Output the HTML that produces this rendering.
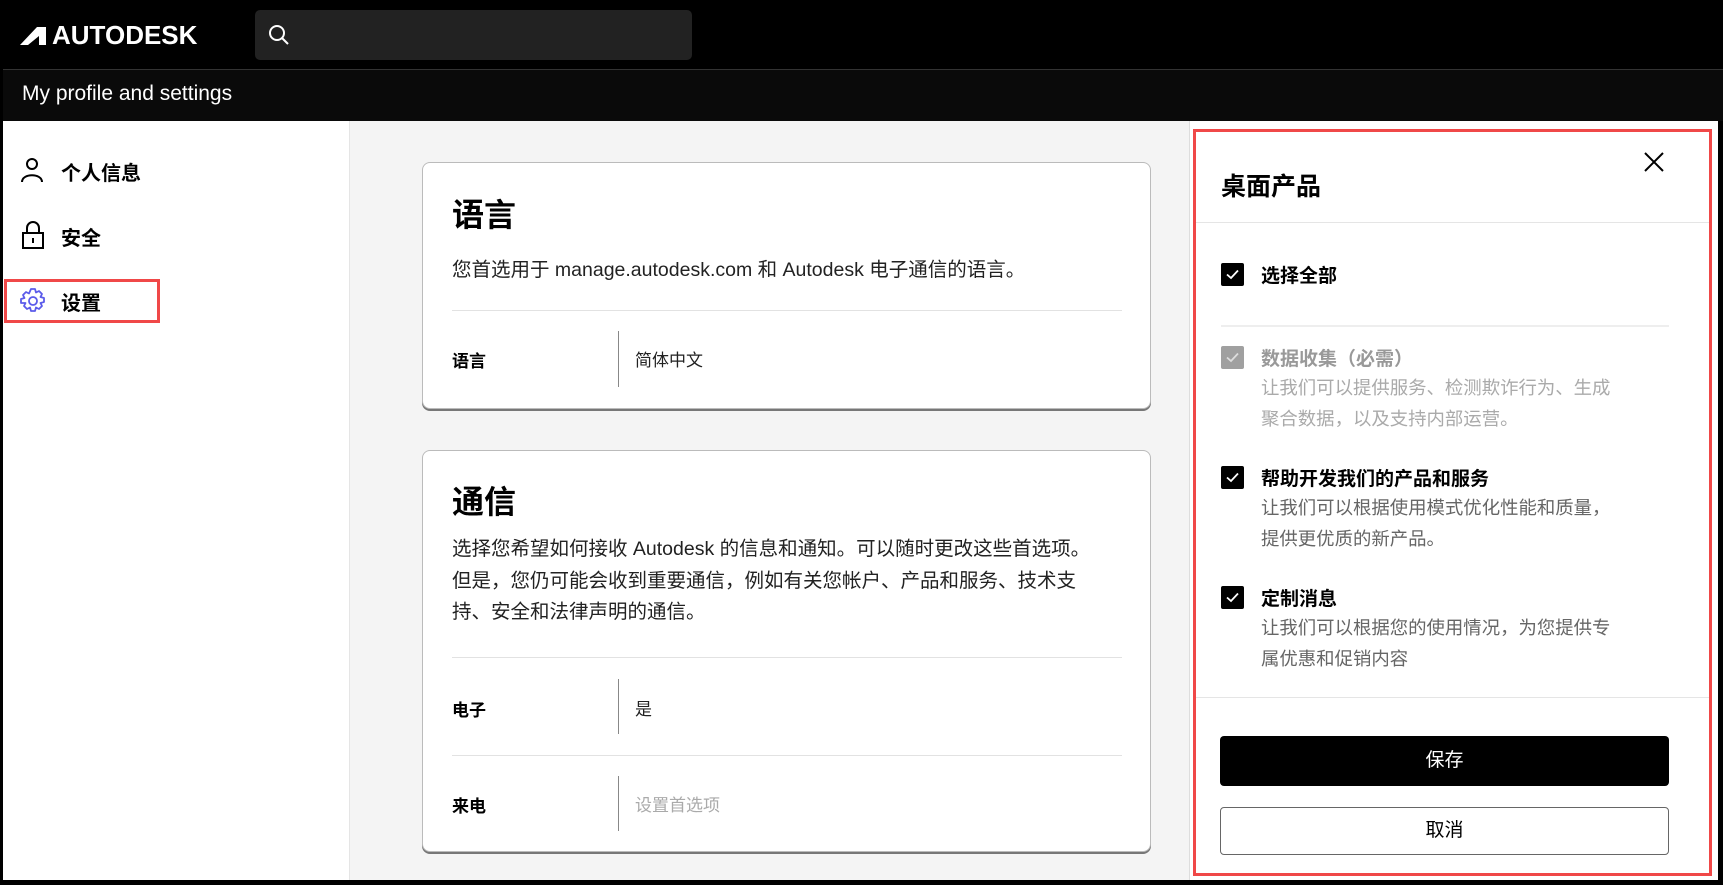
<!DOCTYPE html>
<html><head><meta charset="utf-8"><style>
*{margin:0;padding:0;box-sizing:border-box}
body{width:1723px;height:885px;background:#000;position:relative;overflow:hidden;font-family:"Liberation Sans","Noto Sans CJK SC",sans-serif;color:#000}
.a{position:absolute}
.card{position:absolute;background:#fff;border:1px solid #bbb;border-radius:8px;box-shadow:0 2px 0 #777}
.h{font-weight:700}
.cb{position:absolute;width:23px;height:23px;background:#000;border-radius:2px}
.cb svg{position:absolute;left:5px;top:6px}
.gray{color:#999}
.desc{color:#666;font-size:18.4px;line-height:31px}
</style></head><body>
<div class="a" style="left:0;top:0;width:1723px;height:69px;background:#000"></div>
<svg class="a" style="left:20px;top:27px" width="26" height="18" viewBox="0 0 26 18"><path d="M0 18 L17 0 L26 0 L26 18 L19 18 L19 9 L8 18 Z" fill="#fff"/></svg>
<div class="a h" style="left:52px;top:20px;color:#fff;font-size:26px;line-height:30px">AUTODESK</div>
<div class="a" style="left:255px;top:10px;width:437px;height:50px;background:#222;border-radius:5px"></div>
<svg class="a" style="left:268px;top:24px" width="22" height="22" viewBox="0 0 22 22"><circle cx="9" cy="9" r="7" stroke="#fff" stroke-width="2" fill="none"/><path d="M14 14 L20 20" stroke="#fff" stroke-width="2"/></svg>
<div class="a" style="left:3px;top:69px;width:1720px;height:52px;background:#0a0a0a;border-top:1px solid #333"></div>
<div class="a" style="left:22px;top:82px;color:#fff;font-size:21px">My profile and settings</div>
<div class="a" style="left:3px;top:121px;width:347px;height:759px;background:#fff;border-right:1px solid #e5e5e5"></div>
<svg class="a" style="left:20px;top:157px" width="24" height="26" viewBox="0 0 24 26"><circle cx="12" cy="7" r="5" stroke="#000" stroke-width="2" fill="none"/><path d="M2 25 C2 16 22 16 22 25" stroke="#000" stroke-width="2" fill="none"/></svg>
<div class="a h" style="left:61px;top:157px;font-size:20px">个人信息</div>
<svg class="a" style="left:22px;top:221px" width="22" height="28" viewBox="0 0 22 28"><path d="M5 12 V7 A6 6 0 0 1 17 7 V12" stroke="#000" stroke-width="2" fill="none"/><rect x="1" y="12" width="20" height="15" stroke="#000" stroke-width="2" fill="none"/><path d="M11 17 V22" stroke="#000" stroke-width="2"/></svg>
<div class="a h" style="left:61px;top:222px;font-size:20px">安全</div>
<div class="a" style="left:4px;top:279px;width:156px;height:44px;border:3px solid #f04848"></div>
<svg class="a" style="left:19px;top:287px" width="28" height="28" viewBox="0 0 28 28"><path d="M12 2h4l1 3.5 3-1.5 3 3-1.5 3 3.5 1v4l-3.5 1 1.5 3-3 3-3-1.5-1 3.5h-4l-1-3.5-3 1.5-3-3 1.5-3L2 16v-4l3.5-1L4 8l3-3 3 1.5z" stroke="#5b5bea" stroke-width="1.8" fill="none" stroke-linejoin="round"/><circle cx="14" cy="14" r="4" stroke="#5b5bea" stroke-width="1.8" fill="none"/></svg>
<div class="a h" style="left:61px;top:287px;font-size:20px">设置</div>
<div class="a" style="left:350px;top:121px;width:839px;height:759px;background:#f4f4f4"></div>
<div class="card" style="left:422px;top:162px;width:729px;height:247px"></div>
<div class="a h" style="left:452px;top:190px;font-size:32px">语言</div>
<div class="a" style="left:452px;top:253px;font-size:19.5px;color:#222;white-space:nowrap">您首选用于 manage.autodesk.com 和 Autodesk 电子通信的语言。</div>
<div class="a" style="left:452px;top:310px;width:670px;height:1px;background:#e2e2e2"></div>
<div class="a h" style="left:452px;top:347px;font-size:17px">语言</div>
<div class="a" style="left:618px;top:331px;width:1px;height:56px;background:#888"></div>
<div class="a" style="left:635px;top:346px;font-size:17px;color:#222">简体中文</div>
<div class="card" style="left:422px;top:450px;width:729px;height:402px"></div>
<div class="a h" style="left:452px;top:477px;font-size:32px">通信</div>
<div class="a" style="left:452px;top:534px;font-size:19.5px;line-height:31.5px;color:#222;width:700px;white-space:nowrap">选择您希望如何接收 Autodesk 的信息和通知。可以随时更改这些首选项。<br>但是，您仍可能会收到重要通信，例如有关您帐户、产品和服务、技术支<br>持、安全和法律声明的通信。</div>
<div class="a" style="left:452px;top:657px;width:670px;height:1px;background:#e2e2e2"></div>
<div class="a h" style="left:452px;top:696px;font-size:17px">电子</div>
<div class="a" style="left:618px;top:679px;width:1px;height:55px;background:#888"></div>
<div class="a" style="left:635px;top:695px;font-size:17px;color:#222">是</div>
<div class="a" style="left:452px;top:755px;width:670px;height:1px;background:#e2e2e2"></div>
<div class="a h" style="left:452px;top:792px;font-size:17px">来电</div>
<div class="a" style="left:618px;top:776px;width:1px;height:55px;background:#888"></div>
<div class="a" style="left:635px;top:791px;font-size:17px;color:#aaa">设置首选项</div>
<div class="a" style="left:1189px;top:121px;width:529px;height:759px;background:#fff;border-left:1px solid #ddd"></div>
<div class="a" style="left:1193px;top:129px;width:519px;height:747px;border:3px solid #f04848"></div>
<svg class="a" style="left:1644px;top:152px" width="20" height="20" viewBox="0 0 20 20"><path d="M1 1 L19 19 M19 1 L1 19" stroke="#000" stroke-width="2"/></svg>
<div class="a h" style="left:1221px;top:167px;font-size:25px">桌面产品</div>
<div class="a" style="left:1196px;top:222px;width:513px;height:1px;background:#e5e5e5"></div>
<div class="cb" style="left:1221px;top:263px"><svg width="13" height="11" viewBox="0 0 13 11"><path d="M1 5.5 L5 9 L12 1.5" stroke="#fff" stroke-width="1.8" fill="none"/></svg></div>
<div class="a h" style="left:1261px;top:261px;font-size:19px">选择全部</div>
<div class="a" style="left:1221px;top:325px;width:448px;height:2px;background:#eee"></div>
<div class="cb" style="left:1221px;top:346px;background:#a0a0a0"><svg width="13" height="11" viewBox="0 0 13 11"><path d="M1 5.5 L5 9 L12 1.5" stroke="#ddd" stroke-width="1.8" fill="none"/></svg></div>
<div class="a h gray" style="left:1261px;top:344px;font-size:19px">数据收集（必需）</div>
<div class="a desc" style="left:1261px;top:372px;color:#aaa">让我们可以提供服务、检测欺诈行为、生成<br>聚合数据，以及支持内部运营。</div>
<div class="cb" style="left:1221px;top:466px"><svg width="13" height="11" viewBox="0 0 13 11"><path d="M1 5.5 L5 9 L12 1.5" stroke="#fff" stroke-width="1.8" fill="none"/></svg></div>
<div class="a h" style="left:1261px;top:464px;font-size:19px">帮助开发我们的产品和服务</div>
<div class="a desc" style="left:1261px;top:492px">让我们可以根据使用模式优化性能和质量，<br>提供更优质的新产品。</div>
<div class="cb" style="left:1221px;top:586px"><svg width="13" height="11" viewBox="0 0 13 11"><path d="M1 5.5 L5 9 L12 1.5" stroke="#fff" stroke-width="1.8" fill="none"/></svg></div>
<div class="a h" style="left:1261px;top:584px;font-size:19px">定制消息</div>
<div class="a desc" style="left:1261px;top:612px">让我们可以根据您的使用情况，为您提供专<br>属优惠和促销内容</div>
<div class="a" style="left:1196px;top:697px;width:513px;height:1px;background:#e5e5e5"></div>
<div class="a" style="left:1220px;top:736px;width:449px;height:50px;background:#000;border-radius:4px;color:#fff;font-size:19px;text-align:center;line-height:50px">保存</div>
<div class="a" style="left:1220px;top:807px;width:449px;height:48px;background:#fff;border:1px solid #666;border-radius:4px;font-size:19px;text-align:center;line-height:46px">取消</div>
</body></html>
